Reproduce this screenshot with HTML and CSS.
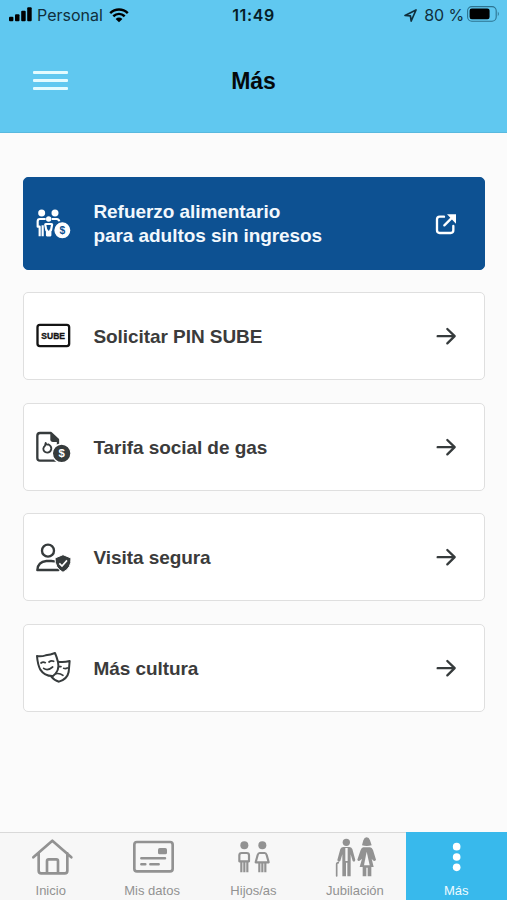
FILE: index.html
```html
<!DOCTYPE html>
<html lang="es">
<head>
<meta charset="utf-8">
<title>Más</title>
<link rel="stylesheet" href="styles.css">
</head>
<body>
<div class="app">
  <header class="header">
    <div class="status">
      <div class="status-left">
        <svg class="signal" viewBox="0 0 23 15"><rect x="0" y="9.7" width="4.4" height="4.6" rx="1"/><rect x="6" y="7.3" width="4.5" height="7" rx="1"/><rect x="12.2" y="3.7" width="4.5" height="10.600" rx="1"/><rect x="18.200" y="0.300" width="4.500" height="14" rx="1"/></svg>
        <span class="carrier">Personal</span>
        <svg class="wifi" viewBox="0 0 20 15"><path d="M1.200 5.100C6.200.300 13.800.300 18.800 5.100M4.300 8.300C7.700 5.300 12.300 5.300 15.700 8.300" fill="none" stroke="#000" stroke-width="2.500"/><path d="M6.600 10.900Q10 8.200 13.400 10.900L10 14.300Z"/></svg>
      </div>
      <span class="clock">11:49</span>
      <div class="status-right">
        <svg class="location" viewBox="0 0 13 13"><path d="M1 6.500L12 1 7.200 12 6.400 6.800Z" fill="none" stroke="#102f3c" stroke-width="1.700" stroke-linejoin="round"/></svg>
        <span class="percent">80 %</span>
        <svg class="battery" viewBox="0 0 33 16"><rect x=".6" y=".6" width="28.600" height="14.600" rx="4.200" fill="none" stroke="#2c7390" stroke-width="1.100"/><rect x="2.600" y="2.600" width="20" height="10.600" rx="2.200"/><path d="M30.800 5.500q2 2.400 0 4.800Z" fill="#2c7390"/></svg>
      </div>
    </div>
    <div class="titlebar">
      <div class="menu"><i></i><i></i><i></i></div>
      <h1 class="title">Más</h1>
    </div>
  </header>

  <main class="list">
    <a class="card card-primary">
      <svg class="icon" viewBox="45 110 110 100">
        <g fill="#fff"><circle cx="65" cy="128" r="10.500"/><circle cx="105" cy="128" r="10.500"/><circle cx="86" cy="146" r="8"/></g>
        <g fill="none" stroke="#fff" stroke-width="6.500" stroke-linejoin="round"><path d="M77 146H60Q53 146 53 153V169H59V198M68 165V198M95 146H110Q117 147 118 153"/><path d="M78 161H94Q97 161 96 165L93 180H91V195H81V180H79L76 165Q75 161 78 161Z"/></g>
        <path d="M80 181H92V197H80Z" fill="#fff"/>
        <circle cx="127" cy="180" r="26" fill="#fff" stroke="#0d5192" stroke-width="4"/>
        <text class="coin" x="127" y="191" fill="#0d5192">$</text>
      </svg>
      <span class="label"><span class="line">Refuerzo alimentario</span><span class="line">para adultos sin ingresos</span></span>
      <svg class="go" viewBox="105 127 66 66"><path d="M132 138H119Q111 138 111 146V179Q111 187 119 187H152Q160 187 160 179V166M133 164L157 140" fill="none" stroke="#fff" stroke-width="7" stroke-linecap="round"/><path d="M141 131H168V159Z" fill="#fff"/></svg>
    </a>
    <a class="card">
      <svg class="icon" viewBox="45 90 110 100"><rect x="52.500" y="107.500" width="95" height="64" rx="7" fill="#fff" stroke="#141414" stroke-width="7"/><text class="sube" x="99.500" y="149" textLength="71" lengthAdjust="spacingAndGlyphs">SUBE</text></svg>
      <span class="label">Solicitar PIN SUBE</span>
      <svg class="go" viewBox="105 466 66 66"><path d="M113 499.500H163M142 478L164 499.500 142 521" class="stroke"/></svg>
    </a>
    <a class="card">
      <svg class="icon" viewBox="45 91 110 100">
        <path d="M108 183H60Q52 183 52 175V108Q52 100 60 100H93L114 120V138" class="stroke"/><path d="M91 98L117 123V127H99Q91 127 91 119Z" fill="#363b3c"/>
        <path d="M77 130Q79 137 85 134Q95 140 94 148Q91 159 82 159Q70 157 70 147Q71 141 75 138Z" fill="none" stroke="#363b3c" stroke-width="5.500" stroke-linejoin="round"/>
        <circle cx="125" cy="161" r="28" fill="#363b3c" stroke="#fff" stroke-width="4"/><text class="coin big" x="125" y="172" fill="#fff">$</text>
      </svg>
      <span class="label">Tarifa social de gas</span>
      <svg class="go" viewBox="105 466 66 66"><path d="M113 499.500H163M142 478L164 499.500 142 521" class="stroke"/></svg>
    </a>
    <a class="card">
      <svg class="icon" viewBox="45 93 110 100">
        <circle cx="84" cy="122" r="18" class="stroke"/><path d="M103 154Q99 153 94 153H79Q54 155 52 180H115" class="stroke"/>
        <path d="M129 134L153 144Q155 174 129 187Q104 174 105 144Z" fill="#363b3c" stroke="#fff" stroke-width="3" stroke-linejoin="round"/><path d="M118 160L126 168 141 151" fill="none" stroke="#fff" stroke-width="5"/>
      </svg>
      <span class="label">Visita segura</span>
      <svg class="go" viewBox="105 466 66 66"><path d="M113 499.500H163M142 478L164 499.500 142 521" class="stroke"/></svg>
    </a>
    <a class="card">
      <svg class="icon" viewBox="45 95 110 100">
        <path d="M113 127Q131 130 149 125L146 158Q142 179 117 187Q102 183 94 172" class="mask"/>
        <path d="M51 110Q64 112 77 108Q92 106 105 101Q110 112 114 128Q120 154 99 170Q74 171 61 151Q53 136 51 110Z" class="mask"/>
        <path d="M63 131Q69 126 76 130M87 128Q94 122 101 126M71 147Q83 156 98 143M117 142H123M131 147Q137 149 142 146M108 163Q120 161 129 168" class="mask thin"/>
      </svg>
      <span class="label">Más cultura</span>
      <svg class="go" viewBox="105 466 66 66"><path d="M113 499.500H163M142 478L164 499.500 142 521" class="stroke"/></svg>
    </a>
  </main>

  <nav class="tabs">
    <a class="tab"><svg viewBox="77 30 150 135"><path d="M99 97L156 47 213 97M115 85V137Q115 145 123 145H193Q201 145 201 137V85M140 145V108Q140 103 145 103H168Q173 103 173 108V145" class="nav-line"/></svg><span>Inicio</span></a>
    <a class="tab"><svg viewBox="381 30 150 135"><rect x="403" y="51" width="115" height="88" rx="8" class="nav-line"/><rect x="474" y="69" width="27" height="19" rx="5" class="nav-fill"/><path d="M424 100H495M424 118H436M451 118H476" class="nav-line wide"/></svg><span>Mis datos</span></a>
    <a class="tab"><svg viewBox="686 30 150 135"><circle cx="735" cy="61" r="12" class="nav-fill"/><circle cx="789" cy="61" r="12" class="nav-fill"/><path d="M727 84H742Q749 84 749 91V109H720V91Q720 84 727 84ZM726 109V142M735 112V142M744 109V142" class="nav-line person"/><path d="M781 84H796Q800 84 802 90L808 112H769L775 90Q777 84 781 84ZM780 113V142M789 113V142M798 113V142" class="nav-line person"/></svg><span>Hijos/as</span></a>
    <a class="tab"><svg viewBox="228 30 150 135"><circle cx="277" cy="52" r="11" class="nav-fill"/><path d="M268 66H286Q292 66 295 72L304 105Q302 113 296 108L290 88V154H280V113H276V154H265V88L259 108Q252 113 250 105L259 72Q262 66 268 66Z" class="nav-fill"/><path d="M274 69H281V108H274Z" fill="#f7f7f7"/><path d="M248 153V118Q248 113 253 113" class="nav-line cane"/><path d="M324 61L328 46Q331 37 338 37Q345 37 348 46L353 61Q338 65 324 61Z" class="nav-fill"/><path d="M328 67H348Q354 68 357 75L366 104Q362 111 356 105L353 101L359 126H352V154H341V128H337V154H326V126H317L324 101L319 106Q313 111 310 104L320 75Q323 68 328 67Z" class="nav-fill"/><path d="M338 80L347 121H330Z" fill="#f7f7f7"/></svg><span>Jubilación</span></a>
    <a class="tab active"><svg viewBox="532 30 150 135"><g fill="#fff"><circle cx="609" cy="65" r="11.500"/><circle cx="609" cy="96" r="11.500"/><circle cx="609" cy="127" r="11.500"/></g></svg><span>Más</span></a>
  </nav>
</div>
</body>
</html>
```
FILE: styles.css
```css
* { box-sizing: border-box; }
body { margin: 0; background: #fbfbfb; font-family: "Liberation Sans", Arial, sans-serif; }
svg { display: block; flex: none; }
.app { width: 507px; height: 900px; display: flex; flex-direction: column; overflow: hidden; }

.header { height: 133px; flex: none; background: #60c8f0; border-bottom: 1px solid #58b9df; }
.status { height: 30px; display: grid; grid-template-columns: 1fr auto 1fr; align-items: center; font-family: Inter, sans-serif; font-size: 16px; line-height: 30px; }
.status-left { display: flex; align-items: center; padding-left: 9px; color: #102f3c; }
.signal { width: 23px; height: 15px; margin-top: -1px; }
.carrier { margin-left: 5px; }
.wifi { width: 20px; height: 15px; margin-left: 6px; }
.clock { font-weight: 600; letter-spacing: .6px; color: #061d27; }
.status-right { display: flex; align-items: center; justify-content: flex-end; padding-right: 7px; color: #102f3c; }
.location { width: 13px; height: 13px; margin-right: 7px; }
.percent { margin-right: 3px; letter-spacing: -.1px; }
.battery { width: 33px; height: 16px; margin-top: -2px; }
.titlebar { display: grid; grid-template-columns: 1fr auto 1fr; align-items: center; height: 101px; }
.menu { display: flex; flex-direction: column; gap: 5px; margin-left: 33px; width: 35px; }
.menu i { height: 3px; border-radius: 1px; background: #e3fbff; }
.title { margin: 2px 0 0; font-size: 23px; font-weight: 700; color: #05090b; }

.list { flex: 1; padding: 44.400px 22px 0 22.500px; display: flex; flex-direction: column; gap: 22.300px; }
.card { height: 88.300px; flex: none; display: flex; align-items: center; padding: 0 27.300px 0 11.500px; background: #fff; border: 1px solid #dfdfdf; border-radius: 5px; color: #3b3b3b; font-size: 19px; font-weight: 700; letter-spacing: -.06px; }
.card-primary { height: 92.300px; background: #0d5192; border-color: #0d5192; color: #f2f8fd; margin: 0 .5px; padding-left: 11px; padding-right: 26.800px; }
.icon { width: 36.670px; height: 33.330px; }
.label { margin-left: 21.800px; padding-top: 2px; flex: 1; line-height: 24px; white-space: nowrap; }
.card-primary .label { padding-top: 1px; }
.line { display: block; }
.go { width: 22px; height: 22px; }
.stroke { fill: none; stroke: #363b3c; stroke-width: 7; stroke-linecap: round; stroke-linejoin: round; }
.mask { fill: #fff; stroke: #363b3c; stroke-width: 6; stroke-linecap: round; stroke-linejoin: round; }
.mask.thin { fill: none; stroke-width: 5; }
.coin { font-size: 31px; font-weight: 700; text-anchor: middle; letter-spacing: 0; }
.big { font-size: 34px; }
.sube { font-size: 26px; font-weight: 700; text-anchor: middle; letter-spacing: 0; fill: #141414; stroke: #141414; stroke-width: 1; }

.tabs { height: 68px; flex: none; display: grid; grid-template-columns: repeat(5, 1fr); background: #f7f7f7; border-top: 1px solid #d9d9d9; }
.tab { display: flex; flex-direction: column; align-items: center; padding-top: 2px; color: #929292; font-size: 13px; line-height: 16px; }
.tab svg { width: 50px; height: 45px; }
.tab span { margin-top: 3px; }
.active { background: #38b9ec; color: #effbff; margin-top: -1px; padding-top: 3px; }
.nav-line { fill: none; stroke: #929292; stroke-width: 8; stroke-linecap: round; stroke-linejoin: round; }
.nav-fill { fill: #929292; }
.nav-line.wide { stroke-width: 7.500; }
.nav-line.person { stroke-width: 6.500; stroke-linecap: butt; }
.nav-line.cane { stroke-width: 5; }
```
